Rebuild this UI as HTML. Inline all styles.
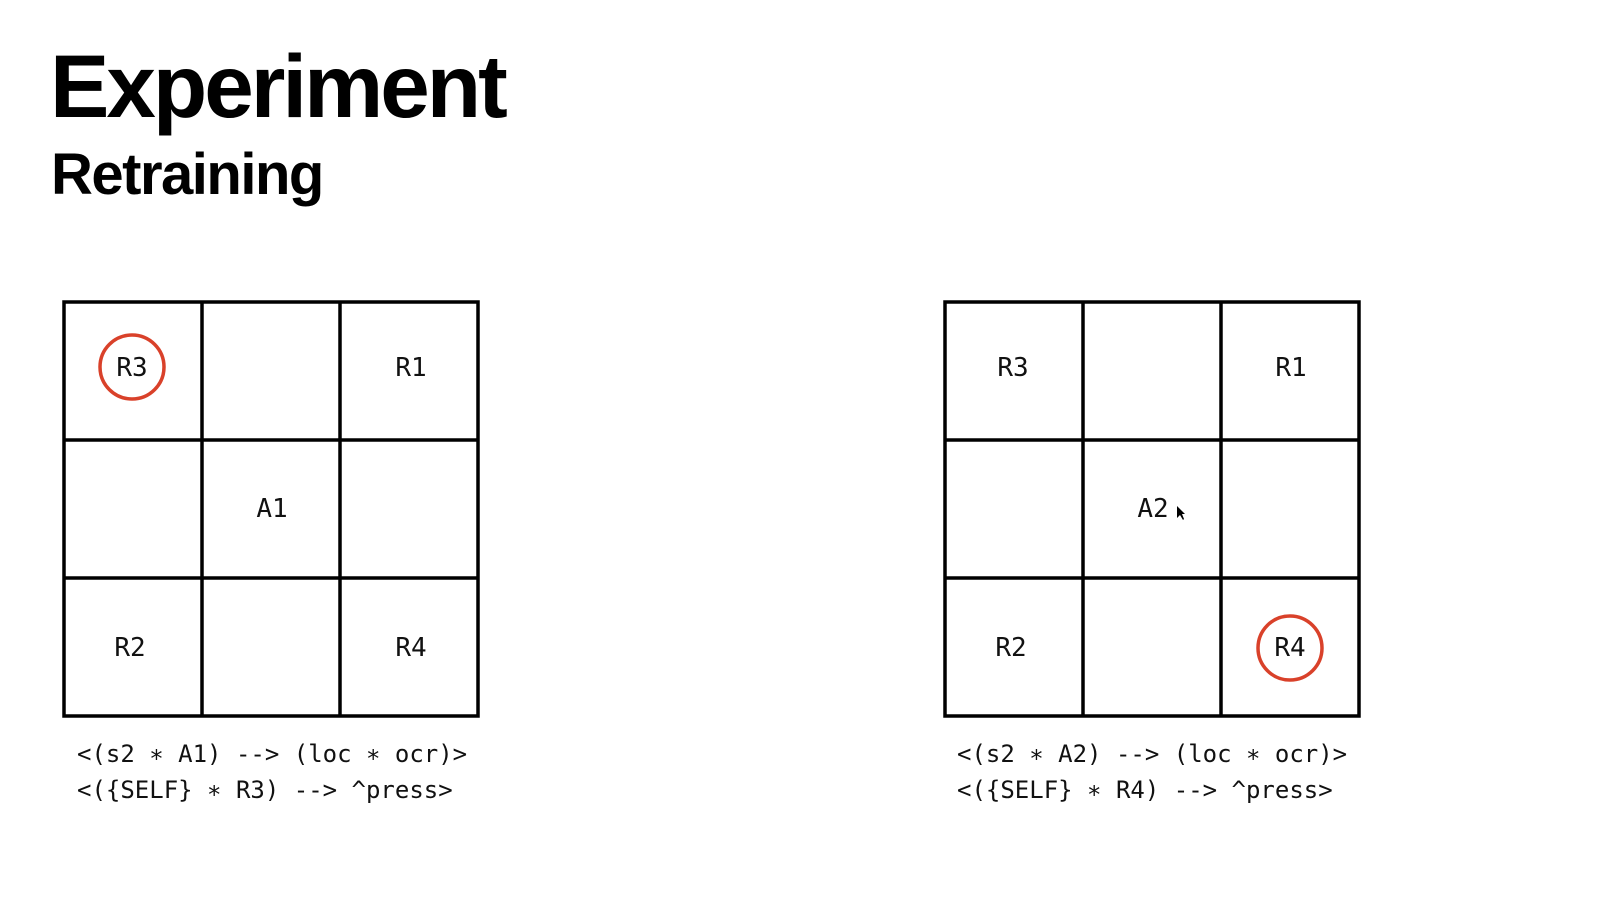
<!DOCTYPE html>
<html><head><meta charset="utf-8"><style>
body{margin:0;width:1613px;height:897px;background:#fff;overflow:hidden;position:relative;font-family:"Liberation Sans",sans-serif}
.t1{position:absolute;left:50px;top:42px;font-size:89px;font-weight:bold;letter-spacing:-3px;line-height:1}
.t2{position:absolute;left:51px;top:146px;font-size:58px;font-weight:bold;letter-spacing:-1.5px;line-height:1}
.code{position:absolute;font-family:"DejaVu Sans Mono","Liberation Mono",monospace;font-size:24px;line-height:36px;white-space:pre;color:#111}
svg{position:absolute;left:0;top:0}
</style></head><body>
<div class="t1">Experiment</div>
<div class="t2">Retraining</div>
<svg width="1613" height="897" font-family="DejaVu Sans Mono, monospace" font-size="26" text-anchor="middle">
<g stroke="#000" stroke-width="3.5" fill="none">
<rect x="64" y="302" width="414" height="414"/>
<line x1="202" y1="302" x2="202" y2="716"/><line x1="340" y1="302" x2="340" y2="716"/>
<line x1="64" y1="440" x2="478" y2="440"/><line x1="64" y1="578" x2="478" y2="578"/>
<rect x="945" y="302" width="414" height="414"/>
<line x1="1083" y1="302" x2="1083" y2="716"/><line x1="1221" y1="302" x2="1221" y2="716"/>
<line x1="945" y1="440" x2="1359" y2="440"/><line x1="945" y1="578" x2="1359" y2="578"/>
</g>
<g stroke="#d9412a" stroke-width="3.5" fill="none">
<circle cx="132" cy="367" r="32"/><circle cx="1290" cy="648" r="32"/>
</g>
<g fill="#111">
<text x="132" y="376">R3</text><text x="411" y="376">R1</text>
<text x="272" y="517">A1</text>
<text x="130" y="656">R2</text><text x="411" y="656">R4</text>
<text x="1013" y="376">R3</text><text x="1291" y="376">R1</text>
<text x="1153" y="517">A2</text>
<text x="1011" y="656">R2</text><text x="1290" y="656">R4</text>
</g>
<path d="M1177 506 L1177 518 L1180 515 L1183 520 L1184 519 L1182 514 L1185 514 Z" fill="#000"/>
</svg>
<div class="code" style="left:77px;top:736px">&lt;(s2 ∗ A1) --&gt; (loc ∗ ocr)&gt;
&lt;({SELF} ∗ R3) --&gt; ^press&gt;</div>
<div class="code" style="left:957px;top:736px">&lt;(s2 ∗ A2) --&gt; (loc ∗ ocr)&gt;
&lt;({SELF} ∗ R4) --&gt; ^press&gt;</div>
</body></html>
